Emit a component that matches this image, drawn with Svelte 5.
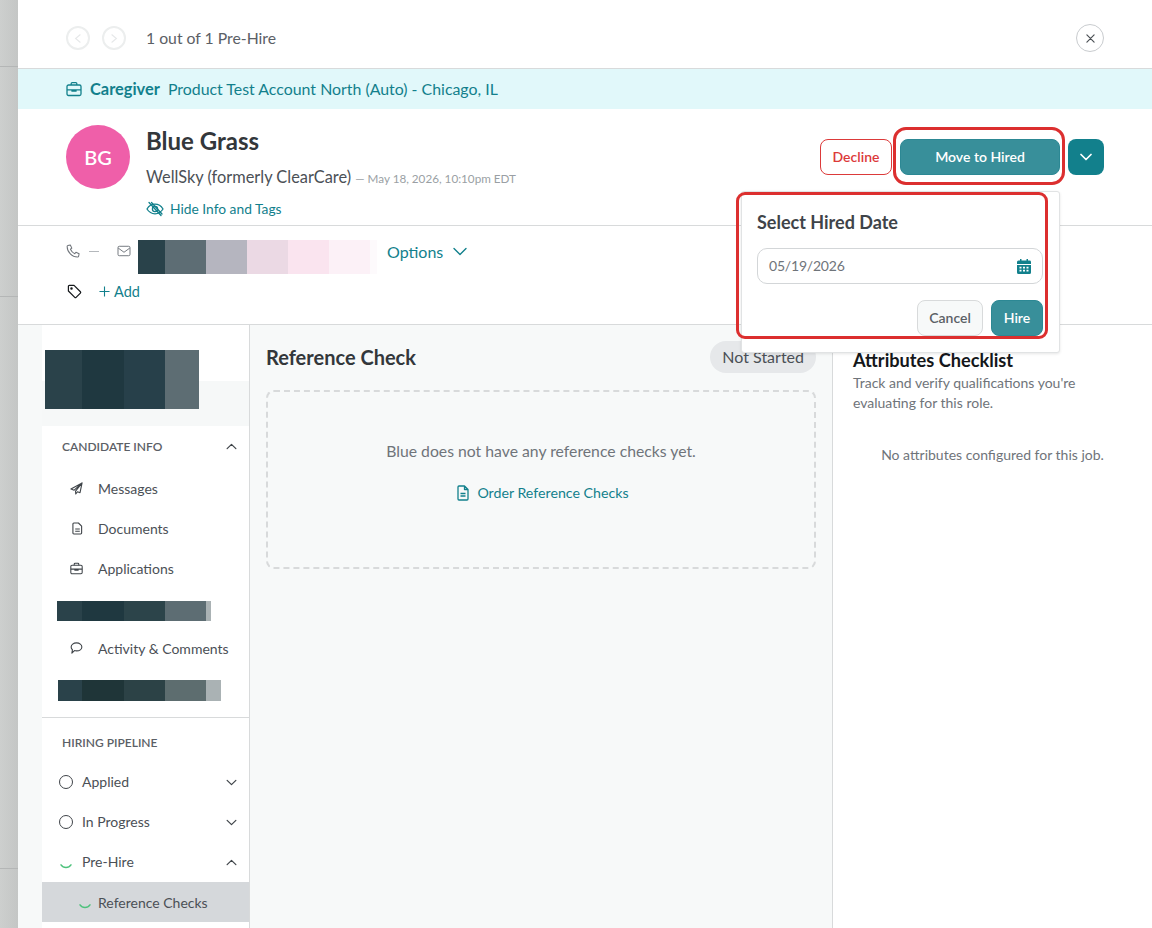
<script>
  const infoTop = [
    { label: 'Messages', icon: 'send' },
    { label: 'Documents', icon: 'doc' },
    { label: 'Applications', icon: 'case' }
  ];
  const m1 = [[37,'#2a424a'],[42,'#1f3840'],[41,'#27404a'],[34,'#5d6d73']];
  const m2 = [[25,'#2a424a'],[42,'#1f3840'],[41,'#2c444a'],[41,'#5d6d73'],[5,'#aab2b4']];
  const m3 = [[24,'#2a424a'],[42,'#1f3538'],[41,'#2c4246'],[41,'#5d6d6f'],[15,'#aab2b4']];
  const email = [[27,'#29424a'],[41,'#5d6d74'],[41,'#b5b5bf'],[41,'#ebd9e4'],[41,'#fae4ef'],[41,'#fcf1f7'],[7,'#fdfafc']];
</script>

{#snippet chev(up)}
  <svg class="chev" viewBox="0 0 12 8" width="11" height="7" fill="none" stroke="#3f4449" stroke-width="1.4" stroke-linecap="round" stroke-linejoin="round">
    <path d={up ? 'M1 6.5 6 1.5l5 5' : 'M1 1.5l5 5 5-5'} />
  </svg>
{/snippet}

{#snippet caseIcon(size, color, sw)}
  <svg viewBox="0 0 16 16" width={size} height={size} fill="none" stroke={color} stroke-width={sw} stroke-linejoin="round">
    <rect x="1" y="4" width="14" height="10.5" rx="1.5" />
    <path d="M5.2 4V2.6a1 1 0 0 1 1-1h3.6a1 1 0 0 1 1 1V4M1 8.8h14M6 8.8v1.4h4V8.8" />
  </svg>
{/snippet}

{#snippet mosaic(parts, h)}
  <div class="mosaic" style="height:{h}px">
    {#each parts as p}<span style="width:{p[0]}px;background:{p[1]}"></span>{/each}
  </div>
{/snippet}

{#snippet spinner()}
  <svg viewBox="0 0 14 14" width="14" height="14" fill="none" stroke="#4ec27c" stroke-width="1.5" stroke-linecap="round">
    <path d="M2 9.8a6 6 0 0 0 10 0" />
  </svg>
{/snippet}

<div class="page">
  <div class="strip">
    <hr class="l1" /><hr class="l2" /><hr class="l3" />
  </div>

  <div class="panel">
    <div class="topbar">
      <span class="nav"><svg viewBox="0 0 10 12" width="8" height="11" fill="none" stroke="#e6e8e9" stroke-width="1.4"><path d="M8 1 2 6l6 5" /></svg></span>
      <span class="nav"><svg viewBox="0 0 10 12" width="8" height="11" fill="none" stroke="#e6e8e9" stroke-width="1.4"><path d="M2 1l6 5-6 5" /></svg></span>
      <span class="count">1 out of 1 Pre-Hire</span>
      <span class="close"><svg viewBox="0 0 10 10" width="9" height="9" fill="none" stroke="#4a4f54" stroke-width="1.3" stroke-linecap="round"><path d="M1 1l8 8M9 1 1 9" /></svg></span>
    </div>

    <div class="banner">
      {@render caseIcon(16, '#12808c', 1.3)}
      <strong>Caregiver</strong>
      <span>Product Test Account North (Auto) - Chicago, IL</span>
    </div>

    <div class="header">
      <div class="avatar">BG</div>
      <div class="who">
        <h1>Blue Grass</h1>
        <div class="src">WellSky (formerly ClearCare) <small>— May 18, 2026, 10:10pm EDT</small></div>
        <div class="hide">
          <svg viewBox="0 0 18 16" width="18" height="16" fill="none" stroke="#12808c" stroke-width="1.3" stroke-linecap="round">
            <path d="M1 8s3-4.8 8-4.8S17 8 17 8s-3 4.8-8 4.8S1 8 1 8Z" />
            <circle cx="9" cy="8" r="2.6" />
            <path d="M3 1.5 15 14.5M5.5 1.5 16 13" />
          </svg>
          Hide Info and Tags
        </div>
      </div>
      <div class="actions">
        <button class="decline">Decline</button>
        <button class="move">Move to Hired</button>
        <button class="drop"><svg viewBox="0 0 12 8" width="12" height="8" fill="none" stroke="#fff" stroke-width="1.7" stroke-linecap="round" stroke-linejoin="round"><path d="M1 1.5l5 5 5-5" /></svg></button>
      </div>
    </div>

    <div class="contact">
      <div class="c-row">
        <svg class="ph up" viewBox="0 0 16 16" width="15" height="15" fill="none" stroke="#6f747a" stroke-width="1.1" stroke-linejoin="round">
          <path d="M2 1.6 4.6 1l1.6 3.4-1.5 1.2c.9 2 2.6 3.8 4.7 4.7l1.2-1.5 3.4 1.6-.6 2.7c-.1.5-.5.8-1 .8C6.5 14 1.3 8.7 1.2 2.6c0-.5.3-.9.8-1Z" />
        </svg>
        <span class="dash up"></span>
        <svg class="ml up" viewBox="0 0 16 14" width="14" height="12" fill="none" stroke="#6f747a" stroke-width="1.1" stroke-linejoin="round">
          <rect x="1" y="1.5" width="14" height="11" rx="1.5" />
          <path d="M1.2 3.5 8 8.5l6.8-5" />
        </svg>
        {@render mosaic(email, 34)}
        <span class="options up">Options</span>
        <svg class="up" viewBox="0 0 14 9" width="14" height="9" fill="none" stroke="#12808c" stroke-width="1.4" stroke-linecap="round" stroke-linejoin="round"><path d="M1 1.5l6 6 6-6" /></svg>
      </div>
      <div class="t-row">
        <svg viewBox="0 0 16 16" width="15" height="15" fill="none" stroke="#15181b" stroke-width="1.3" stroke-linejoin="round">
          <path d="M1.5 2.5a1 1 0 0 1 1-1h5l6.8 6.8a1 1 0 0 1 0 1.4l-4.6 4.6a1 1 0 0 1-1.4 0L1.5 7.5v-5Z" />
          <circle cx="4.8" cy="4.8" r=".7" />
        </svg>
        <span class="add"><svg viewBox="0 0 12 12" width="11" height="11" fill="none" stroke="#12808c" stroke-width="1.2"><path d="M6 .5v11M.5 6h11" /></svg>Add</span>
      </div>
    </div>

    <div class="body">
      <div class="gutter"></div>
      <nav class="side">
        <div class="side-top">
          <div class="shade"></div>
        </div>
        <div class="sec-head"><span>CANDIDATE INFO</span>{@render chev(true)}</div>
        <div class="items">
          {#each infoTop as it}
            <div class="item">
              <span class="ic">
                {#if it.icon === 'send'}
                  <svg viewBox="0 0 14 14" width="13" height="13" fill="none" stroke="#3f4449" stroke-width="1.2" stroke-linejoin="round"><path d="M13 1 1 7.5l3.5 1.3L13 1 6 9.8l.2 3 1.9-2.3 2.7 1L13 1Z" /></svg>
                {:else if it.icon === 'doc'}
                  <svg class="docic" viewBox="0 0 12 14" width="11" height="13" fill="none" stroke="#3f4449" stroke-width="1.2" stroke-linejoin="round"><path d="M2 1h5l3.5 3.5V12a1 1 0 0 1-1 1H2a1 1 0 0 1-1-1V2a1 1 0 0 1 1-1ZM3.5 7.5h5M3.5 10h5" /></svg>
                {:else}
                  {@render caseIcon(13, '#3f4449', 1.3)}
                {/if}
              </span>
              {it.label}
            </div>
          {/each}
          <div class="mos-row m2">{@render mosaic(m2, 20)}</div>
          <div class="item">
            <span class="ic"><svg viewBox="0 0 14 13" width="13" height="12" fill="none" stroke="#3f4449" stroke-width="1.2" stroke-linejoin="round"><path d="M7 1c3.3 0 5.8 1.9 5.8 4.3S10.3 9.600 7 9.600c-.8 0-1.500-.1-2.200-.3L2 12l.6-3.600C1.700 7.600 1.200 6.300 1.200 5.300 1.200 2.900 3.700 1 7 1Z" /></svg></span>
            Activity &amp; Comments
          </div>
          <div class="mos-row m3">{@render mosaic(m3, 21)}</div>
        </div>
        <div class="sec-head pipeline"><span>HIRING PIPELINE</span></div>
        <div class="stage"><span class="ring"></span><span class="st-l">Applied</span>{@render chev(false)}</div>
        <div class="stage"><span class="ring"></span><span class="st-l">In Progress</span>{@render chev(false)}</div>
        <div class="stage"><span class="spin">{@render spinner()}</span><span class="st-l">Pre-Hire</span>{@render chev(true)}</div>
        <div class="sub"><span class="spin">{@render spinner()}</span>Reference Checks</div>
      </nav>

      <main class="main">
        <div class="m-head">
          <h2>Reference Check</h2>
          <span class="badge">Not Started</span>
        </div>
        <div class="empty">
          <p>Blue does not have any reference checks yet.</p>
          <div class="order">
            <svg viewBox="0 0 12 16" width="12" height="16" fill="none" stroke="#12808c" stroke-width="1.3" stroke-linejoin="round"><path d="M2 1h5.5L11 4.500V14a1 1 0 0 1-1 1H2a1 1 0 0 1-1-1V2a1 1 0 0 1 1-1ZM7.5 1v3.500H11M3.5 8.500h5M3.500 11h5" /></svg>
            Order Reference Checks
          </div>
        </div>
      </main>

      <aside class="right">
        <h3>Attributes Checklist</h3>
        <p class="desc">Track and verify qualifications you're evaluating for this role.</p>
        <p class="none">No attributes configured for this job.</p>
      </aside>
    </div>
  </div>

  <div class="redact-top">{@render mosaic(m1, 59)}</div>

  <div class="pop">
    <div class="pop-title">Select Hired Date</div>
    <div class="date">
      <span class="date-text">05/19/2026</span>
      <svg viewBox="0 0 14 15" width="14" height="15" fill="#12808c">
        <path fill-rule="evenodd" d="M3 0h1.500v1.500h5V0H11v1.500h1.500A1.500 1.500 0 0 1 14 3v2H0V3a1.500 1.500 0 0 1 1.500-1.500H3V0ZM0 6h14v7.500a1.500 1.500 0 0 1-1.500 1.500h-11A1.500 1.500 0 0 1 0 13.500V6Zm2.500 1.800v1.600h2V7.800h-2Zm3.500 0v1.600h2V7.800H6Zm3.500 0v1.600h2V7.800h-2Zm-7 3v1.600h2v-1.600h-2Zm3.500 0v1.600h2v-1.600H6Zm3.500 0v1.600h2v-1.600h-2Z" />
      </svg>
    </div>
    <div class="pop-actions">
      <button class="cancel">Cancel</button>
      <button class="hire">Hire</button>
    </div>
  </div>

  <div class="mark mark-a"></div>
  <div class="mark mark-b"></div>
</div>

<style>
  :global(body) {
    margin: 0;
    font-family: Lato, "Open Sans", sans-serif;
    color: #3f4449;
  }
  .page {
    position: relative;
    display: flex;
    width: 1152px;
    height: 928px;
    overflow: hidden;
    background: #fff;
  }
  .strip {
    flex: 0 0 18px;
    background: linear-gradient(90deg, #cdcfce, #c4c6c5);
    display: flex;
    flex-direction: column;
  }
  .strip hr {
    border: 0;
    height: 1px;
    margin: 0;
    background: #b4b6b6;
  }
  .l1 { margin-top: 66px !important; }
  .l2 { margin-top: 229px !important; }
  .l3 { margin-top: 571px !important; }

  .panel {
    flex: 1;
    display: flex;
    flex-direction: column;
    min-width: 0;
  }
  .topbar {
    box-sizing: border-box;
    display: flex;
    align-items: center;
    padding: 8px 48px 0 48px;
    border-bottom: 1px solid #d8dadb;
    flex: 0 0 69px;
  }
  .nav {
    width: 24px;
    height: 24px;
    box-sizing: border-box;
    border: 2px solid #eceeee;
    border-radius: 50%;
    display: flex;
    align-items: center;
    justify-content: center;
    margin-right: 12px;
  }
  .count {
    margin-left: 8px;
    margin-bottom: 2px;
    font-size: 15.75px;
    color: #5b6066;
  }
  .close {
    margin-left: auto;
    width: 28px;
    height: 28px;
    box-sizing: border-box;
    border: 1px solid #c9cccf;
    border-radius: 50%;
    display: flex;
    align-items: center;
    justify-content: center;
  }
  .banner {
    flex: 0 0 40px;
    box-sizing: border-box;
    background: #e1f8fa;
    display: flex;
    align-items: center;
    padding: 0 0 1px 48px;
    color: #12808c;
    font-size: 15.9px;
  }
  .banner strong {
    font-weight: 700;
    font-size: 16.4px;
    margin: 0 8px 0 8px;
  }
  .header {
    flex: 0 0 117px;
    box-sizing: border-box;
    border-bottom: 1px solid #d8dadb;
    display: flex;
    padding: 16px 48px 0 48px;
  }
  .avatar {
    width: 64px;
    height: 64px;
    border-radius: 50%;
    background: #ef5fa9;
    color: #fff;
    font-size: 20px;
    font-weight: 600;
    display: flex;
    align-items: center;
    justify-content: center;
    margin-right: 16px;
  }
  .who h1 {
    margin: 0;
    font-size: 24px;
    line-height: 32px;
    font-weight: 700;
    color: #33373b;
  }
  .src {
    margin-top: 8px;
    font-size: 16.35px;
    line-height: 24px;
    color: #4b5056;
  }
  .src small {
    font-size: 11.7px;
    color: #9a9fa4;
  }
  .hide {
    margin-top: 7px;
    display: flex;
    align-items: center;
    gap: 6px;
    font-size: 13.8px;
    line-height: 24px;
    color: #12808c;
  }
  .actions {
    margin-left: auto;
    margin-top: 14px;
    display: flex;
    gap: 8px;
    align-items: flex-start;
  }
  button {
    font-family: inherit;
    box-sizing: border-box;
    height: 36px;
    border-radius: 8px;
    font-size: 14px;
    font-weight: 600;
    padding: 0 0 2px;
    display: flex;
    align-items: center;
    justify-content: center;
  }
  .decline {
    width: 72px;
    background: #fff;
    border: 1px solid #dc3a3a;
    color: #dc3a3a;
  }
  .move {
    width: 160px;
    background: #388f9a;
    border: 1px solid #2c8894;
    color: #fff;
  }
  .drop {
    width: 36px;
    background: #12808c;
    border: 0;
    padding: 0;
  }

  .contact {
    flex: 0 0 99px;
    box-sizing: border-box;
    border-bottom: 1px solid #d8dadb;
    padding: 14px 48px 0;
  }
  .c-row {
    display: flex;
    align-items: center;
    height: 34px;
  }
  .up { margin-bottom: 12px; }
  .dash {
    width: 10px;
    height: 1px;
    background: #b4b8bc;
    margin-left: 8px;
  }
  .ml { margin-left: 18px; }
  .mosaic {
    display: flex;
  }
  .mosaic span { display: block; height: 100%; }
  .c-row .mosaic { margin-left: 7px; }
  .options {
    margin-left: 10px;
    margin-right: 10px;
    font-size: 16px;
    color: #12808c;
  }
  .t-row {
    display: flex;
    align-items: center;
    margin-top: 5px;
    height: 24px;
    padding-left: 1px;
  }
  .add {
    margin-left: 17px;
    display: flex;
    align-items: center;
    gap: 4px;
    font-size: 14.5px;
    color: #12808c;
  }

  .body {
    flex: 1;
    display: flex;
    min-height: 0;
  }
  .gutter {
    flex: 0 0 24px;
    background: #f7f9f9;
  }
  .side {
    flex: 0 0 208px;
    box-sizing: border-box;
    border-right: 1px solid #d8dadb;
    background: #fff;
    overflow: hidden;
  }
  .side-top {
    height: 101px;
    padding-top: 56px;
    box-sizing: border-box;
  }
  .shade {
    height: 45px;
    background: #f6f8f8;
  }
  .sec-head {
    height: 40px;
    padding: 0 12px 0 20px;
    display: flex;
    align-items: center;
    justify-content: space-between;
    font-size: 12px;
    font-weight: 600;
    color: #5b6066;
  }
  .items {
    padding-top: 2px;
    padding-bottom: 9px;
    border-bottom: 1px solid #d8dadb;
  }
  .item {
    height: 40px;
    display: flex;
    align-items: center;
    font-size: 14px;
    color: #4b5056;
  }
  .ic {
    width: 56px;
    padding-left: 28px;
    box-sizing: border-box;
    display: flex;
    align-items: center;
  }
  .ic .docic { margin-left: 2px; }
  .mos-row {
    height: 40px;
    box-sizing: border-box;
    display: flex;
    align-items: center;
  }
  .m2 { padding: 6px 0 0 15px; }
  .m3 { padding: 4px 0 0 16px; }
  .pipeline {
    height: 33px;
    margin-top: 8px;
    margin-bottom: 3px;
  }
  .stage {
    height: 40px;
    display: flex;
    align-items: center;
    padding: 0 12px 0 17px;
    font-size: 14px;
    color: #4b5056;
  }
  .ring {
    width: 14px;
    height: 14px;
    box-sizing: border-box;
    border: 1.5px solid #3f4449;
    border-radius: 50%;
  }
  .spin {
    display: flex;
    width: 14px;
  }
  .st-l {
    margin-left: 9px;
    margin-bottom: 1px;
    flex: 1;
  }
  .sub {
    height: 40px;
    display: flex;
    align-items: center;
    background: #d5d8db;
    padding-left: 36px;
    font-size: 14px;
    color: #4b5056;
  }
  .sub .spin {
    width: 20px;
  }

  .main {
    flex: 0 0 583px;
    box-sizing: border-box;
    background: #f7f9f9;
    border-right: 1px solid #d8dadb;
    padding: 16px 16px 0;
  }
  .m-head {
    display: flex;
    align-items: center;
    justify-content: space-between;
    height: 32px;
  }
  .m-head h2 {
    margin: 0;
    font-size: 20px;
    font-weight: 700;
    color: #33373b;
  }
  .badge {
    height: 32px;
    box-sizing: border-box;
    padding: 0 12px;
    border-radius: 16px;
    background: #e6e8ea;
    font-size: 16px;
    line-height: 32px;
    color: #4b5056;
  }
  .empty {
    margin-top: 17px;
    height: 179px;
    box-sizing: border-box;
    border: 2px dashed #d8dadb;
    border-radius: 8px;
    display: flex;
    flex-direction: column;
    align-items: center;
    padding-top: 48px;
  }
  .empty p {
    margin: 0;
    font-size: 15.75px;
    line-height: 22px;
    color: #6f747a;
  }
  .order {
    margin-top: 19px;
    margin-left: 4px;
    display: flex;
    align-items: center;
    gap: 8px;
    font-size: 14.2px;
    line-height: 24px;
    color: #12808c;
  }
  .right {
    flex: 1;
    padding: 23px 20px 0;
  }
  .right h3 {
    margin: 0;
    font-size: 18.2px;
    line-height: 24px;
    font-weight: 700;
    color: #14171a;
  }
  .desc {
    margin: 1px 0 0;
    font-size: 14px;
    line-height: 20px;
    color: #6f747a;
  }
  .none {
    margin: 32px 0 0;
    font-size: 14px;
    line-height: 20px;
    text-align: center;
    color: #6f747a;
  }

  .redact-top {
    position: absolute;
    left: 45px;
    top: 350px;
  }
  .pop {
    position: absolute;
    left: 741px;
    top: 191px;
    width: 319px;
    height: 162px;
    box-sizing: border-box;
    background: #fff;
    border: 1px solid #e1e3e4;
    border-radius: 3px;
    box-shadow: 0 1px 3px rgba(0, 0, 0, 0.1);
    padding: 19px 15px 0 15px;
  }
  .pop-title {
    font-size: 18px;
    line-height: 22px;
    font-weight: 700;
    color: #3f4449;
  }
  .date {
    margin-top: 15px;
    width: 286px;
    height: 36px;
    box-sizing: border-box;
    border: 1px solid #d3d6d8;
    border-radius: 10px;
    display: flex;
    align-items: center;
    justify-content: space-between;
    padding: 0 11px 0 11px;
    font-size: 14px;
    letter-spacing: -.2px;
    color: #6f747a;
  }
  .date-text { margin-bottom: 2px; }
  .pop-actions {
    margin-top: 16px;
    width: 286px;
    display: flex;
    justify-content: flex-end;
    gap: 8px;
  }
  .cancel {
    width: 66px;
    background: #f7f9f9;
    border: 1px solid #d8dadb;
    color: #5b6066;
  }
  .hire {
    width: 52px;
    background: #388f9a;
    border: 1px solid #2c8894;
    color: #fff;
  }
  .mark {
    position: absolute;
    box-sizing: border-box;
    border: 3px solid #dc2f2f;
    pointer-events: none;
  }
  .mark-a {
    left: 893px;
    top: 127px;
    width: 172px;
    height: 58px;
    border-radius: 13px;
  }
  .mark-b {
    left: 736px;
    top: 192px;
    width: 312px;
    height: 147px;
    border-radius: 9px;
  }
</style>
